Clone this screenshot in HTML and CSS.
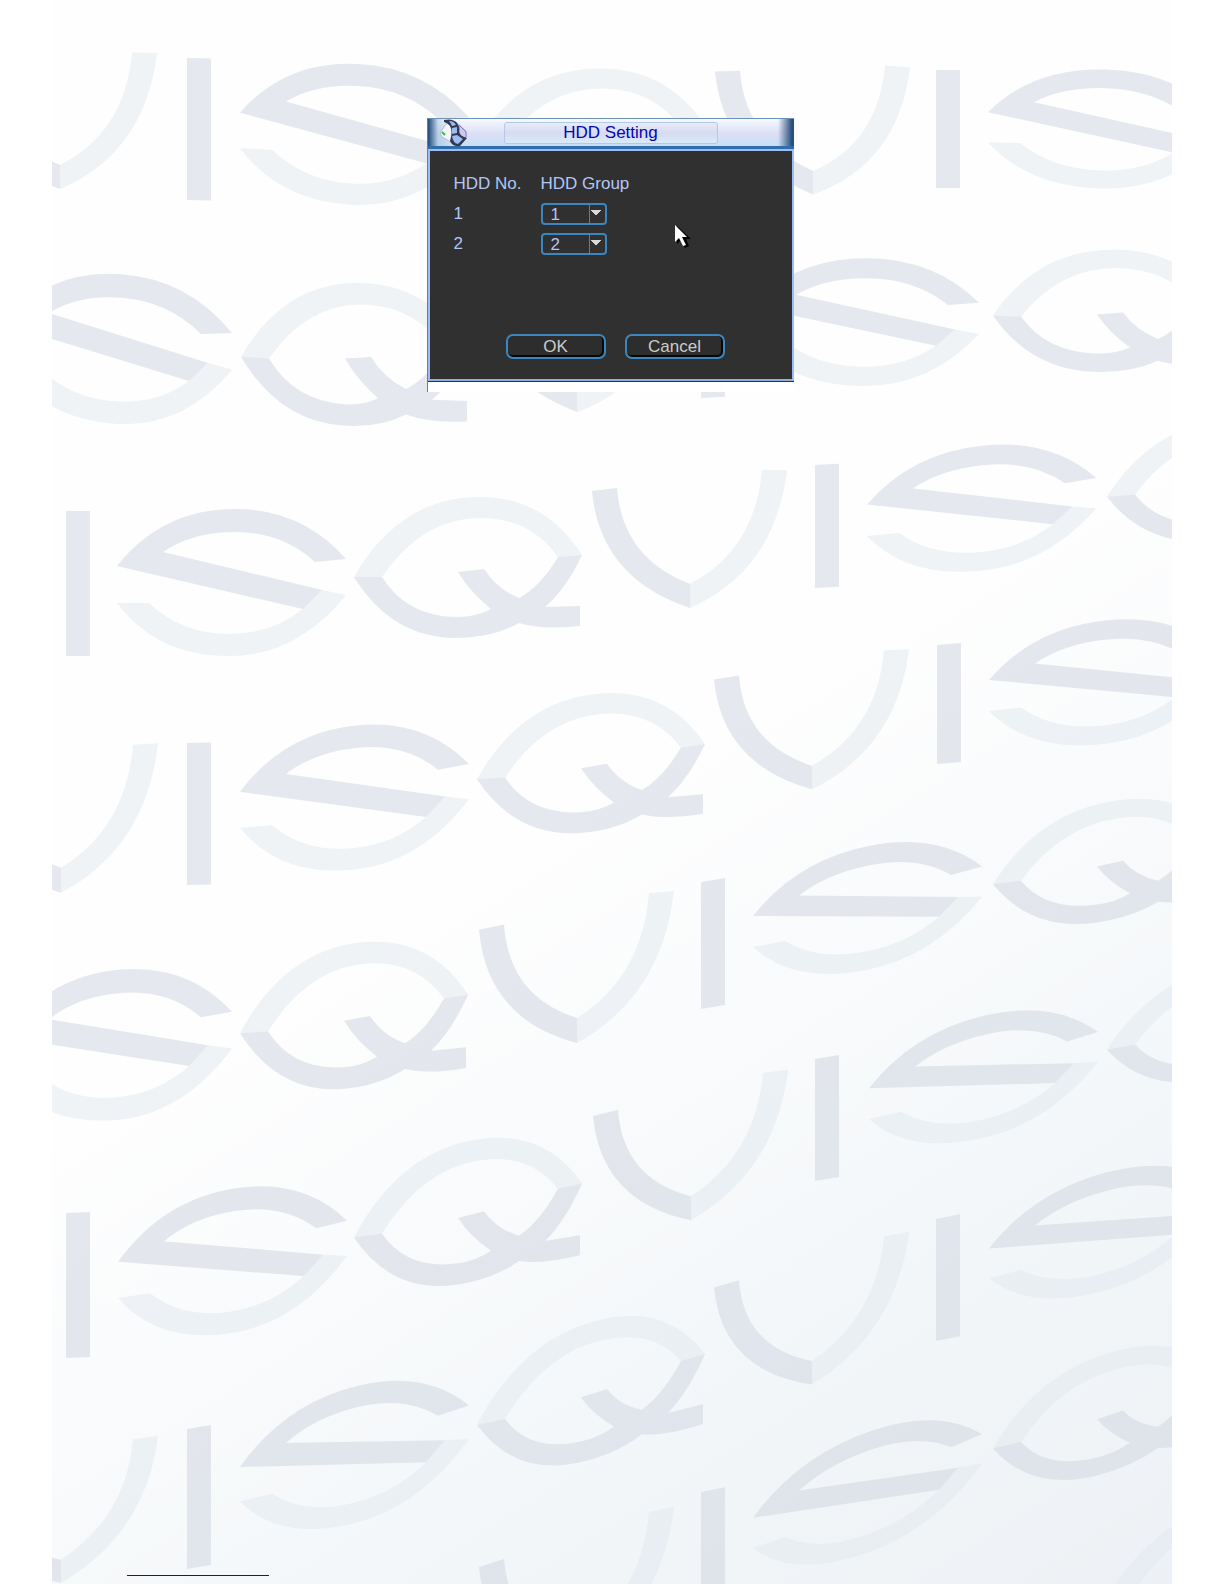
FILE: index.html
```html
<!DOCTYPE html>
<html lang="en">
<head>
    <meta charset="UTF-8">
    <meta name="viewport" content="width=device-width, initial-scale=1.0">
    <title>HDD Setting</title>
    <link rel="stylesheet" href="styles.css">
</head>
<body>
    <main class="sheet">
        <svg class="watermark" viewBox="52 0 1120 1584" preserveAspectRatio="xMidYMin slice" aria-hidden="true">
            <defs>
                <g id="mark-v">
                    <path class="dark" d="M0 21L25 18Q30 88 98 114V138Q8 108 0 21Z"/>
                    <path class="light" d="M170 0H195Q183 100 98 138V114Q163 80 170 0Z"/>
                </g>
                <g id="mark-i">
                    <path class="dark" d="M0 0H24V100H0Z"/>
                </g>
                <g id="mark-s">
                    <path class="dark" d="M0 57Q45 0 118 0Q185 0 229 50L198 53Q165 23 118 23Q75 23 46 43L205 81L186 100Z"/>
                    <path class="light" d="M0 94H32Q65 125 112 125Q155 125 186 100L205 81L229 86Q180 147 112 147Q40 147 0 94Z"/>
                </g>
                <g id="mark-q">
                    <path class="light" d="M2 80Q48 0 128 0Q193 0 230 58L206 60Q178 21 129 21Q70 21 30 80Z"/>
                    <path class="dark" d="M2 80H30Q55 120 106 120Q124 120 139 112Q118 95 106 75L132 72Q145 92 167 101Q188 90 206 60L230 58Q214 92 193 110L228 109V129Q190 133 167 126Q140 141 104 141Q40 141 2 80Z"/>
                </g>
            </defs>

            <use href="#mark-v" transform="matrix(1 .02 0 1 -38 49)"/>
            <use href="#mark-i" transform="matrix(1 .02 0 1.42 187 58)"/>
            <use href="#mark-s" transform="matrix(1 .05 0 .96 240 58)"/>
            <use href="#mark-q" transform="matrix(1 .02 0 .95 475 66)"/>
            <use href="#mark-v" transform="matrix(1 .085 0 .98 715 51)"/>
            <use href="#mark-i" transform="matrix(1 0 0 1.18 936 70)"/>
            <use href="#mark-s" transform="matrix(1 .03 0 .81 988 66)"/>

            <use href="#mark-s" transform="matrix(1 .07 0 1.02 3 266)"/>
            <use href="#mark-q" transform="matrix(1 .065 0 1.02 239 275)"/>
            <use href="#mark-v" transform="matrix(1 .06 0 .95 479 275)"/>
            <use href="#mark-i" transform="matrix(1 -.05 0 1.2 701 278)"/>
            <use href="#mark-s" transform="matrix(1 .01 0 .87 750 257)"/>
            <use href="#mark-q" transform="matrix(1 .03 0 .87 991 246)"/>

            <use href="#mark-i" transform="matrix(1 0 0 1.45 66 511)"/>
            <use href="#mark-s" transform="matrix(1 0 0 1 117 509)"/>
            <use href="#mark-q" transform="matrix(1 0 0 1 352 497)"/>
            <use href="#mark-v" transform="matrix(1 0 0 1 592 470)"/>
            <use href="#mark-i" transform="matrix(1 -.05 0 1.23 815 465)"/>
            <use href="#mark-s" transform="matrix(1 -.09 0 .85 867 456)"/>
            <use href="#mark-q" transform="matrix(1 -.08 0 .86 1105 428)"/>

            <use href="#mark-v" transform="matrix(1 -.06 0 1.04 -37 755)"/>
            <use href="#mark-i" transform="matrix(1 -.02 0 1.42 187 743)"/>
            <use href="#mark-s" transform="matrix(1 -.092 0 .98 240 736)"/>
            <use href="#mark-q" transform="matrix(1 -.06 0 .98 475 701)"/>
            <use href="#mark-v" transform="matrix(1 -.05 0 .98 714 659)"/>
            <use href="#mark-i" transform="matrix(1 -.08 0 1.19 937 645)"/>
            <use href="#mark-s" transform="matrix(1 -.1 0 .84 989 632)"/>

            <use href="#mark-s" transform="matrix(1 -.08 0 1.02 3 979)"/>
            <use href="#mark-q" transform="matrix(1 -.07 0 1.03 238 951)"/>
            <use href="#mark-v" transform="matrix(1 -.087 0 1.04 479 908)"/>
            <use href="#mark-i" transform="matrix(1 -.17 0 1.27 701 882)"/>
            <use href="#mark-s" transform="matrix(1 -.19 0 .84 753 868)"/>
            <use href="#mark-q" transform="matrix(1 -.13 0 .845 991 817)"/>

            <use href="#mark-i" transform="matrix(1 -.04 0 1.45 66 1213)"/>
            <use href="#mark-s" transform="matrix(1 -.15 0 .98 118 1206)"/>
            <use href="#mark-q" transform="matrix(1 -.14 0 1.01 352 1157)"/>
            <use href="#mark-v" transform="matrix(1 -.13 0 1 593 1095)"/>
            <use href="#mark-i" transform="matrix(1 -.17 0 1.22 815 1059)"/>
            <use href="#mark-s" transform="matrix(1 -.22 0 .83 869 1041)"/>
            <use href="#mark-q" transform="matrix(1 -.18 0 .8 1105 986)"/>

            <use href="#mark-v" transform="matrix(1 -.15 0 .96 -37 1465)"/>
            <use href="#mark-i" transform="matrix(1 -.17 0 1.4 187 1429)"/>
            <use href="#mark-s" transform="matrix(1 -.24 0 .93 240 1414)"/>
            <use href="#mark-q" transform="matrix(1 -.217 0 .98 475 1347)"/>
            <use href="#mark-v" transform="matrix(1 -.18 0 .98 714 1267)"/>
            <use href="#mark-i" transform="matrix(1 -.2 0 1.22 936 1219)"/>
            <use href="#mark-s" transform="matrix(1 -.26 0 .8 989 1203)"/>

            <use href="#mark-v" transform="matrix(1 -.2 0 1 479 1546)"/>
            <use href="#mark-i" transform="matrix(1 -.2 0 1.2 701 1492)"/>
            <use href="#mark-s" transform="matrix(1 -.34 0 .82 753 1471)"/>
            <use href="#mark-q" transform="matrix(1 -.24 0 .85 991 1381)"/>
            <use href="#mark-q" transform="matrix(1 -.28 0 .8 1105 1534)"/>
        </svg>

        <div class="frame">
            <form class="dialog">
                <header class="titlebar">
                    <svg class="icon" viewBox="0 0 28 28" aria-hidden="true">
                        <path d="M1 14L7 5L17 3L27 12V18L17 26L3 18Z" fill="#f4f4fc" stroke="#b4b5d8"/>
                        <path d="M20 6L27 13V18L20 24Z" fill="#cfc8f4" stroke="#8580bb"/>
                        <path d="M3 13L6 16" stroke="#22c832" stroke-width="2"/>
                        <path d="M5 1Q14 -1 18 4Q21 8 20 12Q20 17 28 19L21 27Q13 28 11 22Q14 12 11 7Q9 4 5 3Z" fill="#35394f"/>
                        <path d="M10 2Q15 2 17 6L13 7Q12 4 10 2ZM13 9L18 8L18 14L13 15ZM13 17L18 16L24 20L19 25Q14 24 13 17Z" fill="#9dbdf5"/>
                    </svg>
                    <h1 class="title">HDD Setting</h1>
                </header>
                <div class="content">
                    <table class="disks">
                        <thead>
                            <tr>
                                <th class="no">HDD No.</th>
                                <th>HDD Group</th>
                            </tr>
                        </thead>
                        <tbody>
                            <tr>
                                <td><label for="group1">1</label></td>
                                <td>
                                    <select id="group1" class="group">
                                        <option selected>1</option>
                                        <option>2</option>
                                    </select>
                                </td>
                            </tr>
                            <tr>
                                <td><label for="group2">2</label></td>
                                <td>
                                    <select id="group2" class="group">
                                        <option>1</option>
                                        <option selected>2</option>
                                    </select>
                                </td>
                            </tr>
                        </tbody>
                    </table>
                    <div class="actions">
                        <button type="button">OK</button>
                        <button type="button">Cancel</button>
                    </div>
                </div>
                <svg class="pointer" viewBox="0 0 18 25" aria-hidden="true">
                    <path d="M3 2V20L7 16L11 24L15 22L12 15H17Z" fill="#000"/>
                    <path d="M1 1V18L5 14L9 22L12 21L8 13H13Z" fill="#fff"/>
                </svg>
            </form>
        </div>

        <hr class="rule">
    </main>
</body>
</html>
```
FILE: styles.css
```css
*
{
    box-sizing: border-box;
}
body
{
    margin: 0;
    background-color: #ffffff;
    font-family: "Liberation Sans", Arial, sans-serif;
    font-size: 17px;
    line-height: 20px;
}
.sheet
{
    position: relative;
    display: flex;
    flex-direction: column;
    align-items: center;
    min-height: 100vh;
    margin: 0 52px;
    padding: 118px 4px 8px 0;
    background: linear-gradient(148deg, #fefefe 0%, #fefefe 50%, #f5f8fa 74%, #edf1f5 100%);
}

/* background pattern */
.watermark
{
    position: absolute;
    top: 0;
    left: 0;
    width: 100%;
    height: 100%;
}
.dark
{
    fill: #d4d9e2;
    fill-opacity: 0.6;
}
.light
{
    fill: #dfe7ee;
    fill-opacity: 0.5;
}

/* dialog */
.frame
{
    position: relative;
    width: 367px;
    max-width: 100%;
    padding-bottom: 11px;
    border-left: 1px solid #5f7fa8;
    background-color: #ffffff;
}
.dialog
{
    position: relative;
    margin: 0;
}
.titlebar
{
    position: relative;
    display: flex;
    justify-content: center;
    height: 31px;
    padding: 3px 0;
    border-top: 1px solid #6d92b8;
    border-bottom: 3px solid #2f6ea9;
    background: linear-gradient(90deg, #1f4a78 0, rgba(160, 190, 220, 0.5) 10px, transparent 22px, transparent 350px, #274e7c 364px), linear-gradient(#f5f9ff, #dcdff5 55%, #c5e0f5);
}
.icon
{
    position: absolute;
    top: 0;
    left: 11px;
    width: 28px;
    height: 28px;
}
.title
{
    width: 214px;
    height: 22px;
    margin: 0;
    border: 1px solid #b9c8e2;
    border-radius: 3px;
    background: linear-gradient(#e6ecfa, #d6dbf0 50%, #d8ebfa);
    color: #0505b4;
    font-size: 17px;
    font-weight: normal;
    line-height: 20px;
    text-align: center;
}
.content
{
    padding: 18px 24px 20px;
    border: 2px solid #9dbdf2;
    border-bottom-color: #93aee0;
    background-color: #303030;
    box-shadow: 0 1px 0 #26324a;
}
.disks
{
    border-collapse: collapse;
    color: #b3c6f5;
}
.disks th, .disks td
{
    height: 30px;
    padding: 0;
    font-weight: normal;
    text-align: left;
}
.disks .no
{
    width: 87px;
}
.group
{
    display: block;
    width: 66px;
    height: 22px;
    padding: 0 8px;
    border: 2px solid #3a86c0;
    border-radius: 4px;
    appearance: none;
    background: 
        conic-gradient(from -45deg at 50% 100%, #d8d8d8 0 90deg, transparent 0) right 4px top 5px / 10px 5px no-repeat,
        linear-gradient(#3a86c0, #3a86c0) right 15px top 0 / 1px 100% no-repeat,
        #303030;
    color: #b3c6f5;
    font: inherit;
}
.actions
{
    display: flex;
    gap: 19px;
    margin-top: 75px;
    padding-left: 52px;
}
.actions button
{
    width: 100px;
    height: 25px;
    padding: 0;
    border: 2px solid #3a86c0;
    border-radius: 7px;
    background-color: #2d2d2d;
    box-shadow: inset -1px -1px 0 1px #080808;
    color: #cccccc;
    font: inherit;
    line-height: 20px;
}
.pointer
{
    position: absolute;
    top: 106px;
    left: 246px;
    width: 18px;
    height: 25px;
}

.rule
{
    position: relative;
    align-self: flex-start;
    width: 142px;
    height: 1px;
    margin: auto 0 0 75px;
    border: 0;
    background-color: #1408d0;
}
```
